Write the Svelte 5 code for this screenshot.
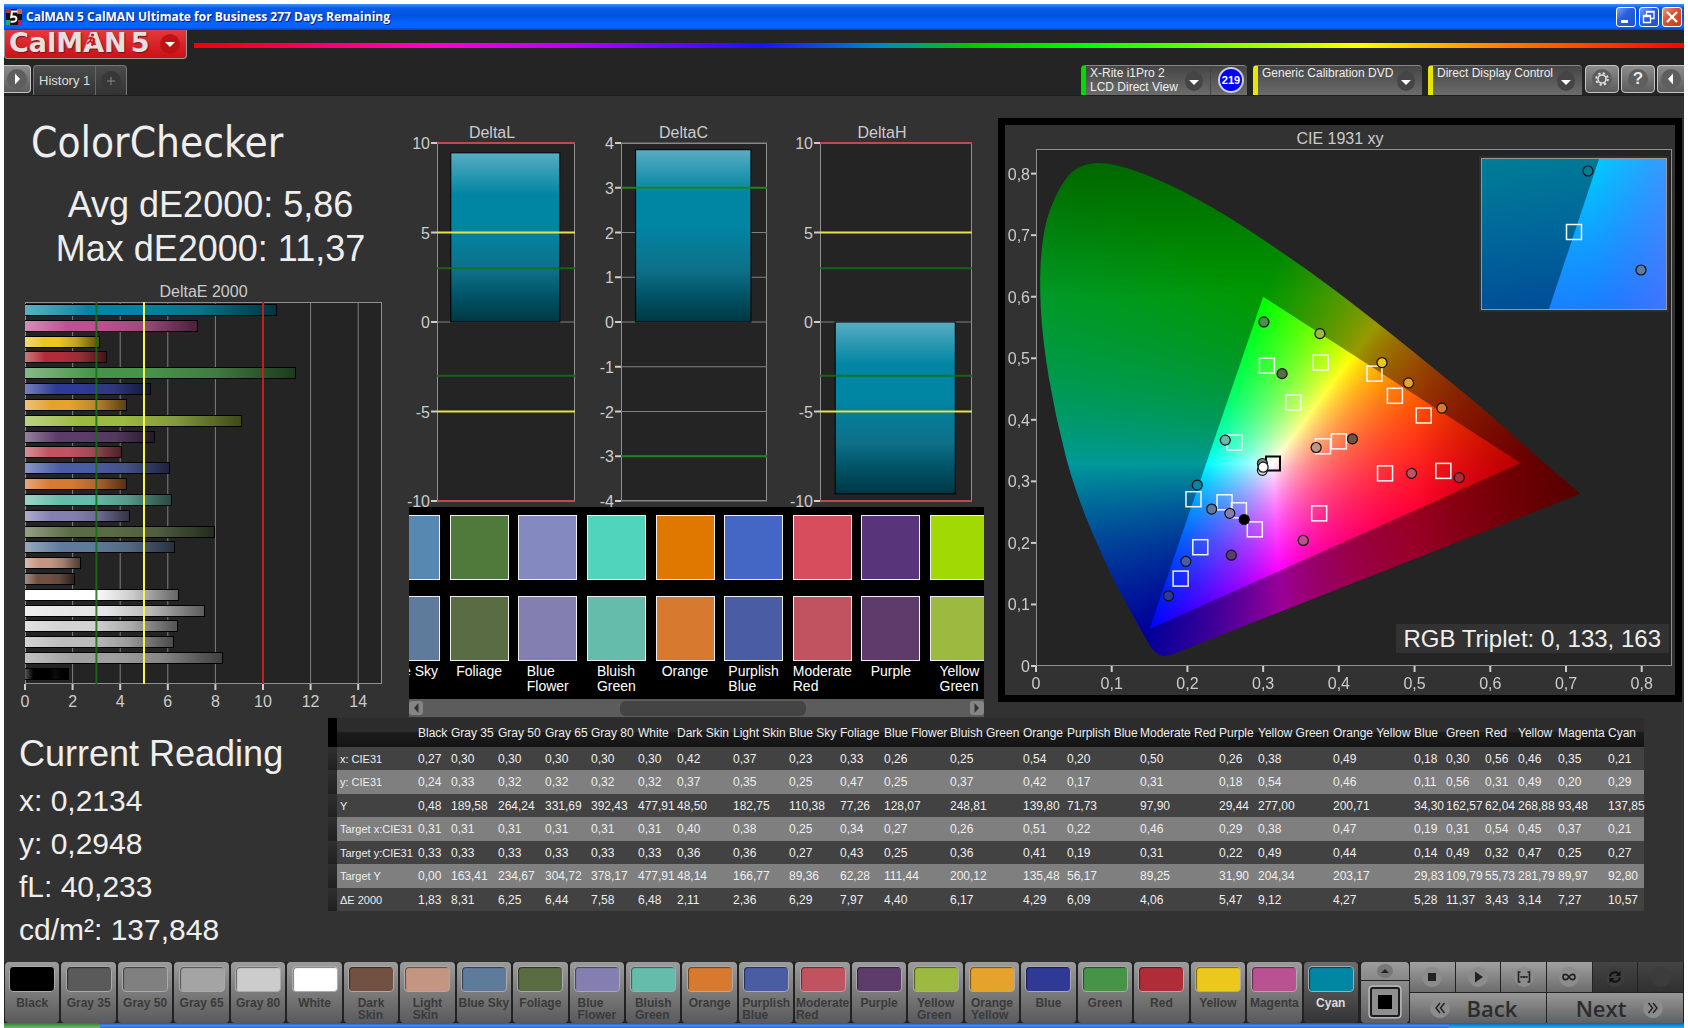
<script>
    import { onMount } from 'svelte';

    const patches = [
        { name: 'Black', color: '#000000', width: 33, values: ['0,27', '0,24', '0,48', '0,31', '0,33', '0,00', '1,83'] },
        { name: 'Gray 35', color: '#5a5a5a', bar: '#a0a0a0', width: 47, values: ['0,30', '0,33', '189,58', '0,31', '0,33', '163,41', '8,31'] },
        { name: 'Gray 50', color: '#808080', bar: '#bcbcbc', width: 47, values: ['0,30', '0,32', '264,24', '0,31', '0,33', '234,67', '6,25'] },
        { name: 'Gray 65', color: '#a4a4a4', bar: '#d2d2d2', width: 46, values: ['0,30', '0,32', '331,69', '0,31', '0,33', '304,72', '6,44'] },
        { name: 'Gray 80', color: '#cccccc', bar: '#e6e6e6', width: 47, values: ['0,30', '0,32', '392,43', '0,31', '0,33', '378,17', '7,58'] },
        { name: 'White', color: '#ffffff', width: 39, values: ['0,30', '0,32', '477,91', '0,31', '0,33', '477,91', '6,48'] },
        { name: 'Dark Skin', color: '#735142', width: 56, values: ['0,42', '0,37', '48,50', '0,40', '0,36', '48,14', '2,11'] },
        { name: 'Light Skin', color: '#c49682', width: 56, values: ['0,37', '0,35', '182,75', '0,38', '0,36', '166,77', '2,36'] },
        { name: 'Blue Sky', color: '#5e7b9c', target: '#5688b2', oneLine: true, width: 51, values: ['0,23', '0,25', '110,38', '0,25', '0,27', '89,36', '6,29'] },
        { name: 'Foliage', color: '#596c43', target: '#4f7a3c', width: 44, values: ['0,33', '0,47', '77,26', '0,34', '0,43', '62,28', '7,97'] },
        { name: 'Blue Flower', color: '#8380b1', target: '#8489bf', width: 66, values: ['0,26', '0,25', '128,07', '0,27', '0,25', '111,44', '4,40'] },
        { name: 'Bluish Green', color: '#65bcaa', target: '#50d4bb', width: 73, values: ['0,25', '0,37', '248,81', '0,26', '0,36', '200,12', '6,17'] },
        { name: 'Orange', color: '#d87930', target: '#e07800', width: 44, values: ['0,54', '0,42', '139,80', '0,51', '0,41', '135,48', '4,29'] },
        { name: 'Purplish Blue', color: '#4a5ca4', target: '#4466c4', width: 73, values: ['0,20', '0,17', '71,73', '0,22', '0,19', '56,17', '6,09'] },
        { name: 'Moderate Red', color: '#c15361', target: '#d64d5d', width: 79, values: ['0,50', '0,31', '97,90', '0,46', '0,31', '89,25', '4,06'] },
        { name: 'Purple', color: '#5d3c6b', target: '#58357a', width: 39, values: ['0,26', '0,18', '29,44', '0,29', '0,22', '31,90', '5,47'] },
        { name: 'Yellow Green', color: '#9dba40', target: '#a1d904', width: 75, values: ['0,38', '0,54', '277,00', '0,38', '0,49', '204,34', '9,12'] },
        { name: 'Orange Yellow', color: '#e5a22c', width: 81, values: ['0,49', '0,46', '200,71', '0,47', '0,44', '203,17', '4,27'] },
        { name: 'Blue', color: '#2e3a96', width: 32, values: ['0,18', '0,11', '34,30', '0,19', '0,14', '29,83', '5,28'] },
        { name: 'Green', color: '#479448', width: 39, values: ['0,30', '0,56', '162,57', '0,31', '0,49', '109,79', '11,37'] },
        { name: 'Red', color: '#b02c38', width: 33, values: ['0,56', '0,31', '62,04', '0,54', '0,32', '55,73', '3,43'] },
        { name: 'Yellow', color: '#ecc71c', width: 40, values: ['0,46', '0,49', '268,88', '0,45', '0,47', '281,79', '3,14'] },
        { name: 'Magenta', color: '#ba5292', width: 50, values: ['0,35', '0,20', '93,48', '0,37', '0,25', '89,97', '7,27'] },
        { name: 'Cyan', color: '#0085a3', width: 39, values: ['0,21', '0,29', '137,85', '0,21', '0,27', '92,80', '10,57'] }
    ];

    const rowNames = ['x: CIE31', 'y: CIE31', 'Y', 'Target x:CIE31', 'Target y:CIE31', 'Target Y', 'ΔE 2000'];
    const tableWidth = 87 + patches.reduce((sum, p) => sum + p.width, 0);

    const bars = patches
        .map((p) => ({ color: p.bar ?? p.color, value: parseFloat(p.values[6].replace(',', '.')) }))
        .reverse();

    const strip = patches.filter((p) => p.target);

    const deltaCharts = [
        { title: 'DeltaL', max: 10, step: 5, value: 9.45, limits: [[3, 'green'], [5, 'yellow'], [10, 'red']] },
        { title: 'DeltaC', max: 4, step: 1, value: 3.85, limits: [[3, 'bright']], short: true },
        { title: 'DeltaH', max: 10, step: 5, value: -9.6, limits: [[3, 'green'], [5, 'yellow'], [10, 'red']] }
    ];

    function ticks(max, step) {
        const list = [];
        for (let v = max; v >= -max; v -= step) list.push(v);
        return list;
    }

    // chromaticity diagram, both axes run from 0 to 0.84
    const span = 0.84;
    const cieTicks = [0, 0.1, 0.2, 0.3, 0.4, 0.5, 0.6, 0.7, 0.8];
    const px = (x) => `${(x / span) * 100}%`;
    const py = (y) => `${(1 - y / span) * 100}%`;
    const comma = (v) => String(v).replace('.', ',');

    const targets = [
        [0.305, 0.488], [0.376, 0.493], [0.34, 0.428], [0.447, 0.475], [0.474, 0.439], [0.512, 0.407],
        [0.262, 0.363], [0.379, 0.357], [0.4, 0.365], [0.208, 0.271], [0.249, 0.266], [0.268, 0.253],
        [0.289, 0.222], [0.217, 0.193], [0.191, 0.142], [0.374, 0.248], [0.461, 0.313], [0.538, 0.317]
    ];

    const readings = [
        [0.301, 0.559, '#479448'], [0.375, 0.54, '#9dba40'], [0.325, 0.475, '#596c43'], [0.457, 0.493, '#ecc71c'],
        [0.492, 0.46, '#e5a22c'], [0.536, 0.419, '#d87930'], [0.25, 0.367, '#65bcaa'], [0.37, 0.355, '#c49682'],
        [0.418, 0.369, '#735142'], [0.213, 0.294, '#0085a3'], [0.232, 0.255, '#5e7b9c'], [0.256, 0.248, '#8380b1'],
        [0.275, 0.238, '#000000'], [0.353, 0.204, '#ba5292'], [0.258, 0.18, '#5d3c6b'], [0.198, 0.17, '#4a5ca4'],
        [0.175, 0.114, '#2e3a96'], [0.496, 0.313, '#c15361'], [0.559, 0.306, '#b02c38'], [0.299, 0.329, '#808080'],
        [0.299, 0.318, '#dddddd'], [0.3, 0.323, '#ffffff']
    ];

    const locus = [
        [0.719, 0.28], [0.659, 0.342], [0.598, 0.411], [0.527, 0.482], [0.456, 0.553], [0.383, 0.622],
        [0.315, 0.681], [0.262, 0.724], [0.192, 0.774], [0.127, 0.808], [0.0847, 0.819], [0.0594, 0.813],
        [0.043, 0.799], [0.026, 0.766], [0.0106, 0.715], [0.0042, 0.634], [0.0085, 0.529], [0.026, 0.404],
        [0.052, 0.28], [0.098, 0.15], [0.128, 0.082], [0.148, 0.038], [0.157, 0.021], [0.172, 0.014], [0.19, 0.024]
    ];

    let canvas;

    // linear sRGB of a chromaticity, scaled so that the strongest channel is full
    function chroma(x, y) {
        const X = x / y;
        const Z = (1 - x - y) / y;
        const rgb = [
            3.2406 * X - 1.5372 - 0.4986 * Z,
            -0.9689 * X + 1.8758 + 0.0415 * Z,
            0.0557 * X - 0.204 + 1.057 * Z
        ].map((c) => Math.max(c, 0));
        const top = Math.max(...rgb);
        return rgb.map((c) => (255 * c) / top);
    }

    function paintLayer(w, h, level, outline) {
        const layer = document.createElement('canvas');
        layer.width = w;
        layer.height = h;
        const ctx = layer.getContext('2d');
        const image = ctx.createImageData(w, h);
        for (let j = 0; j < h; j++) {
            for (let i = 0; i < w; i++) {
                const x = ((i + 0.5) / w) * span;
                const y = (1 - (j + 0.5) / h) * span;
                const fade = level * Math.min(1, 1 - (x - 0.5) * 2.1) * Math.min(1, 1 - (y - 0.6) * 1.5);
                const [r, g, b] = chroma(x, y);
                image.data.set([r * fade, g * fade, b * fade, 255], (j * w + i) * 4);
            }
        }
        ctx.putImageData(image, 0, 0);
        ctx.globalCompositeOperation = 'destination-in';
        ctx.beginPath();
        outline(ctx, ([x, y]) => [(x / span) * w, (1 - y / span) * h]);
        ctx.closePath();
        ctx.fill();
        return layer;
    }

    onMount(() => {
        const { width: w, height: h } = canvas;
        const ctx = canvas.getContext('2d');
        const dark = paintLayer(w, h, 0.6, (c, at) => {
            c.moveTo(...at(locus[0]));
            for (let i = 1; i < locus.length - 1; i++) {
                const [ax, ay] = at(locus[i]);
                const [bx, by] = at(locus[i + 1]);
                c.quadraticCurveTo(ax, ay, (ax + bx) / 2, (ay + by) / 2);
            }
            c.lineTo(...at(locus[locus.length - 1]));
        });
        const bright = paintLayer(w, h, 1, (c, at) => {
            c.moveTo(...at([0.64, 0.33]));
            c.lineTo(...at([0.3, 0.6]));
            c.lineTo(...at([0.15, 0.06]));
        });
        ctx.drawImage(dark, 0, 0);
        ctx.drawImage(bright, 0, 0);
    });
</script>

<div class="window">
    <div class="titlebar">
        <svg class="app-icon" viewBox="0 0 16 16" width="16" height="16">
            <rect width="16" height="16" fill="#111" />
            <path d="M0 0h5v4H0z" fill="#a33" /><path d="M11 0h5v5h-5z" fill="#c63" />
            <path d="M0 11h4v5H0z" fill="#2a6" /><path d="M12 11h4v5h-4z" fill="#a26" />
            <path d="M11.500 2.500H6L5.200 8q5-1.500 5.300 1.800Q10.300 13.500 4.500 12.500" fill="none" stroke="#fff" stroke-width="2" />
        </svg>
        <span class="title">CalMAN 5 CalMAN Ultimate for Business 277 Days Remaining</span>
        <button class="win-button" aria-label="Minimize">
            <svg viewBox="0 0 18 18" width="18" height="18"><path d="M4 12h7v3H4z" fill="#fff" /></svg>
        </button>
        <button class="win-button" aria-label="Restore">
            <svg viewBox="0 0 18 18" width="18" height="18"><path d="M6.500 7V3.500h7.500v7h-3M6 4h8M3.500 7.500h7v7h-7zM3 8.500h8" fill="none" stroke="#fff" stroke-width="1.300" /></svg>
        </button>
        <button class="win-button close" aria-label="Close">
            <svg viewBox="0 0 18 18" width="18" height="18"><path d="M4 4l10 10M14 4L4 14" stroke="#fff" stroke-width="2.400" /></svg>
        </button>
    </div>

    <header>
        <div class="brand-row">
            <button class="brand">
                <span>CalMAN</span><span>5</span>
                <svg class="runner" viewBox="0 0 12 14" width="12" height="14">
                    <circle cx="7.500" cy="2" r="1.600" fill="#c9171c" />
                    <path d="M7 4L5 8l3 2-1 3M5 8L2 11M2.500 6L6 4.500 10 7" fill="none" stroke="#c9171c" stroke-width="1.600" />
                </svg>
                <svg class="brand-arrow" viewBox="0 0 20 20" width="20" height="20"><circle cx="10" cy="10" r="10" fill="#c01216" /><path d="M5 8h10l-5 5z" fill="#fff" /></svg>
            </button>
            <div class="rainbow"></div>
        </div>
        <div class="tab-row">
            <button class="square left-edge" aria-label="Show workflow">
                <svg viewBox="0 0 20 20" width="20" height="20"><circle cx="10" cy="10" r="10" /><path d="M8 4.500l5 5.500-5 5.500z" fill="#fff" /></svg>
            </button>
            <div class="tabs">
                <button class="tab">History 1</button>
                <button class="tab add" aria-label="New history">
                    <svg viewBox="0 0 20 20" width="20" height="20"><circle cx="10" cy="10" r="10" fill="#383838" /><path d="M10 6v8M6 10h8" stroke="#888" /></svg>
                </button>
            </div>
            <div class="devices">
                <div class="device meter">
                    <button class="device-main">
                        <span>X-Rite i1Pro 2<br />LCD Direct View</span>
                        <svg viewBox="0 0 18 20" width="18" height="20"><ellipse cx="9" cy="10" rx="9" ry="10" /><path d="M4 9h10l-5 5z" fill="#fff" /></svg>
                    </button>
                    <span class="count">219</span>
                </div>
                <div class="device source">
                    <button class="device-main">
                        <span>Generic Calibration DVD</span>
                        <svg viewBox="0 0 18 20" width="18" height="20"><ellipse cx="9" cy="10" rx="9" ry="10" /><path d="M4 9h10l-5 5z" fill="#fff" /></svg>
                    </button>
                </div>
                <div class="device display">
                    <button class="device-main">
                        <span>Direct Display Control</span>
                        <svg viewBox="0 0 18 20" width="18" height="20"><ellipse cx="9" cy="10" rx="9" ry="10" /><path d="M4 9h10l-5 5z" fill="#fff" /></svg>
                    </button>
                </div>
                <button class="square" aria-label="Settings">
                    <svg viewBox="0 0 20 20" width="20" height="20"><circle cx="10" cy="10" r="10" /><circle cx="10" cy="10" r="4" fill="none" stroke="#ddd" stroke-width="1.600" /><circle cx="10" cy="10" r="5.800" fill="none" stroke="#ddd" stroke-width="2" stroke-dasharray="2.300 2.255" /></svg>
                </button>
                <button class="square help" aria-label="Help"><span>?</span></button>
                <button class="square right-edge" aria-label="Collapse">
                    <svg viewBox="0 0 20 20" width="20" height="20"><circle cx="10" cy="10" r="10" /><path d="M12 4.500L7 10l5 5.500z" fill="#fff" /></svg>
                </button>
            </div>
        </div>
    </header>

    <main>
        <div class="charts">
            <section class="summary">
                <h1>ColorChecker</h1>
                <p>Avg dE2000: 5,86</p>
                <p>Max dE2000: 11,37</p>
                <h2>DeltaE 2000</h2>
                <div class="plot de">
                    <svg class="layer">
                        {#each [2, 4, 6, 8, 10, 12, 14] as t}
                            <line class="gridline" x1="{t / 0.15}%" x2="{t / 0.15}%" y1="0" y2="100%" />
                        {/each}
                    </svg>
                    <div class="layer bars">
                        {#each bars as bar}
                            <div class="bar" style:--c={bar.color} style:width="{bar.value / 0.15}%"></div>
                        {/each}
                    </div>
                    <svg class="layer">
                        <line class="limit green" x1="20%" x2="20%" y1="0" y2="100%" />
                        <line class="limit yellow" x1="33.333%" x2="33.333%" y1="0" y2="100%" />
                        <line class="limit red" x1="66.667%" x2="66.667%" y1="0" y2="100%" />
                        {#each [0, 2, 4, 6, 8, 10, 12, 14] as t}
                            <svg x="{t / 0.15}%" y="100%" overflow="visible">
                                <line class="tick" y2="6" />
                                <text y="23" text-anchor="middle">{t}</text>
                            </svg>
                        {/each}
                    </svg>
                </div>
            </section>

            <section class="middle">
                <div class="deltas">
                    {#each deltaCharts as chart}
                        <div class="delta" class:short={chart.short}>
                            <h2>{chart.title}</h2>
                            <div class="plot">
                                <svg class="layer">
                                    <defs>
                                        <linearGradient id="cyan-{chart.title}" x1="0" y1="0" x2="0" y2="1">
                                            <stop offset="0" stop-color="#58adc2" />
                                            <stop offset="0.25" stop-color="#0085a3" />
                                            <stop offset="0.45" stop-color="#0085a3" />
                                            <stop offset="0.7" stop-color="#0e7088" />
                                            <stop offset="0.85" stop-color="#005366" />
                                            <stop offset="1" stop-color="#003743" />
                                        </linearGradient>
                                    </defs>
                                    {#each ticks(chart.max, chart.step) as t}
                                        {@const y = 50 - (t / chart.max) * 50}
                                        {#if chart.short || t === 0}
                                            <line class="gridline" x1="0" x2="100%" y1="{y}%" y2="{y}%" />
                                        {/if}
                                        <svg y="{y}%" overflow="visible">
                                            <line class="tick" x1="-6" />
                                            <text x="-7" y="6" text-anchor="end">{t}</text>
                                        </svg>
                                    {/each}
                                    <rect
                                        x="10%"
                                        width="79%"
                                        y="{chart.value > 0 ? 50 - (chart.value / chart.max) * 50 : 50}%"
                                        height="{(Math.abs(chart.value) / chart.max) * 50}%"
                                        fill="url(#cyan-{chart.title})"
                                        stroke="#000"
                                    />
                                    {#each chart.limits as [v, tone]}
                                        {@const off = (v / chart.max) * 50}
                                        <line class="limit {tone}" x1="0" x2="100%" y1="{50 - off}%" y2="{50 - off}%" />
                                        <line class="limit {tone}" x1="0" x2="100%" y1="{50 + off}%" y2="{50 + off}%" />
                                    {/each}
                                </svg>
                            </div>
                        </div>
                    {/each}
                </div>

                <div class="strip">
                    <ul>
                        {#each strip as patch}
                            <li>
                                <div class="swatch" style:background={patch.target}></div>
                                <div class="swatch" style:background={patch.color}></div>
                                <span>
                                    {#if patch.oneLine}
                                        {patch.name}
                                    {:else}
                                        {#each patch.name.split(' ') as word}<b>{word}</b>{/each}
                                    {/if}
                                </span>
                            </li>
                        {/each}
                    </ul>
                    <div class="scrollbar">
                        <button aria-label="Scroll left"><svg viewBox="0 0 14 14" width="14" height="14"><path d="M9.500 2L5 7l4.500 5z" fill="#333" /></svg></button>
                        <div class="track"><div class="thumb"></div></div>
                        <button aria-label="Scroll right"><svg viewBox="0 0 14 14" width="14" height="14"><path d="M4.500 2L9 7l-4.500 5z" fill="#333" /></svg></button>
                    </div>
                </div>
            </section>

            <section class="cie">
                <h2>CIE 1931 xy</h2>
                <div class="plot">
                    <canvas class="layer" width="636" height="517" bind:this={canvas}></canvas>
                    <svg class="layer">
                        {#each cieTicks as t}
                            <svg x={px(t)} y="100%" overflow="visible">
                                <line class="tick" y2="6" />
                                <text y="23" text-anchor="middle">{comma(t)}</text>
                            </svg>
                            <svg y={py(t)} overflow="visible">
                                <line class="tick" x1="-5" />
                                <text x="-6" y="6" text-anchor="end">{comma(t)}</text>
                            </svg>
                        {/each}
                        {#each targets as [x, y]}
                            <svg x={px(x)} y={py(y)} overflow="visible"><rect class="target" x="-7.500" y="-7.500" width="15" height="15" /></svg>
                        {/each}
                        <svg x={px(0.313)} y={py(0.329)} overflow="visible"><rect class="target white-point" x="-7" y="-7" width="14" height="14" /></svg>
                        {#each readings as [x, y, color]}
                            <circle cx={px(x)} cy={py(y)} r="5" fill={color} stroke="#111" stroke-width="1.200" />
                        {/each}
                    </svg>
                    <svg class="inset" viewBox="0 0 184 150" preserveAspectRatio="none">
                        <defs>
                            <linearGradient id="inset-dark" x1="0" y1="0" x2="0.200" y2="1">
                                <stop offset="0" stop-color="#007d96" />
                                <stop offset="0.5" stop-color="#00689a" />
                                <stop offset="1" stop-color="#004e98" />
                            </linearGradient>
                            <linearGradient id="inset-light" x1="0.400" y1="0" x2="0.550" y2="1">
                                <stop offset="0" stop-color="#00ccff" />
                                <stop offset="0.5" stop-color="#10a0ff" />
                                <stop offset="1" stop-color="#1a7cff" />
                            </linearGradient>
                            <linearGradient id="inset-tint" x1="0" y1="0" x2="1" y2="0">
                                <stop offset="0.4" stop-color="#5a60ff" stop-opacity="0" />
                                <stop offset="1" stop-color="#6a70ff" stop-opacity="0.500" />
                            </linearGradient>
                        </defs>
                        <rect width="184" height="150" fill="url(#inset-dark)" />
                        <path d="M117 0H184V150H67z" fill="url(#inset-light)" />
                        <path d="M117 0H184V150H67z" fill="url(#inset-tint)" />
                        <circle cx="106" cy="12" r="5" fill="#007d96" stroke="#111" stroke-width="1.200" />
                        <rect class="target" x="84.500" y="65.500" width="15" height="15" />
                        <circle cx="159" cy="111" r="5" fill="#5e7b9c" stroke="#111" stroke-width="1.200" />
                    </svg>
                    <p class="triplet">RGB Triplet: 0, 133, 163</p>
                </div>
            </section>
        </div>

        <div class="details">
            <section class="reading">
                <h2>Current Reading</h2>
                <p>x: 0,2134</p>
                <p>y: 0,2948</p>
                <p>fL: 40,233</p>
                <p>cd/m²: 137,848</p>
            </section>
            <div class="table-wrap">
                <table>
                    <colgroup>
                        <col style:width="{900 / tableWidth}%" />
                        <col style:width="{7800 / tableWidth}%" />
                        {#each patches as patch}
                            <col style:width="{(patch.width * 100) / tableWidth}%" />
                        {/each}
                    </colgroup>
                    <thead>
                        <tr>
                            <td class="handle"></td>
                            <td></td>
                            {#each patches as patch}
                                <th scope="col">{patch.name}</th>
                            {/each}
                        </tr>
                    </thead>
                    <tbody>
                        {#each rowNames as name, i}
                            <tr>
                                <td class="handle"></td>
                                <th scope="row">{name}</th>
                                {#each patches as patch}
                                    <td>{patch.values[i]}</td>
                                {/each}
                            </tr>
                        {/each}
                    </tbody>
                </table>
            </div>
        </div>
    </main>

    <footer>
        <div class="palette">
            {#each patches as patch}
                <button class="patch" class:active={patch.name === 'Cyan'}>
                    <i style:background={patch.color}></i>
                    <span>
                        {#if patch.oneLine || patch.name.startsWith('Gray')}
                            {patch.name}
                        {:else}
                            {#each patch.name.split(' ') as word}<b>{word}</b>{/each}
                        {/if}
                    </span>
                </button>
            {/each}
        </div>
        <div class="window-mode">
            <button class="up" aria-label="More">
                <svg viewBox="0 0 16 14" width="16" height="14"><ellipse cx="8" cy="7" rx="8" ry="7" fill="#777" /><path d="M4 9l4-4 4 4z" fill="#222" /></svg>
            </button>
            <button class="pattern" aria-label="Pattern window">
                <svg viewBox="0 0 34 34" width="34" height="34">
                    <rect x="1" y="1" width="32" height="32" rx="3" fill="#8f8f8f" stroke="#ccc" />
                    <rect x="3" y="3" width="28" height="28" rx="2" fill="none" stroke="#1c1c1c" stroke-width="2" />
                    <path d="M10 10h14v14H10z" />
                </svg>
            </button>
        </div>
        <div class="controls">
            <button aria-label="Stop"><svg viewBox="0 0 20 20" width="20" height="20"><circle cx="10" cy="10" r="10" /><path d="M6 6h8v8H6z" fill="#222" /></svg></button>
            <button aria-label="Read"><svg viewBox="0 0 20 20" width="20" height="20"><circle cx="10" cy="10" r="10" /><path d="M7 4.500l8 5.500-8 5.500z" fill="#222" /></svg></button>
            <button aria-label="Read series"><svg viewBox="0 0 20 20" width="20" height="20"><circle cx="10" cy="10" r="10" /><path d="M6.500 5H4.500v10h2M13.500 5h2v10h-2" fill="none" stroke="#222" stroke-width="1.600" /><path d="M6.500 9h2v2h-2zM9 9h2v2H9zM11.500 9h2v2h-2z" fill="#222" /></svg></button>
            <button aria-label="Read continuous"><svg viewBox="0 0 20 20" width="20" height="20"><circle cx="10" cy="10" r="10" /><path d="M10 10C8 6.500 4 6.500 4 10s4 3.500 6 0 6-3.500 6 0-4 3.500-6 0" fill="none" stroke="#222" stroke-width="1.600" /></svg></button>
            <button class="off" aria-label="Refresh" disabled><svg viewBox="0 0 20 20" width="20" height="20"><circle cx="10" cy="10" r="10" /><path d="M5 9.500C5.500 5 11 4 14 7M15 10.500C14.500 15 9 16 6 13" fill="none" stroke="#111" stroke-width="2" /><path d="M15.500 4v5h-5zM4.500 16v-5h5z" fill="#111" /></svg></button>
            <button class="off" aria-label="Record" disabled><svg viewBox="0 0 20 20" width="20" height="20"><circle cx="10" cy="10" r="10" /></svg></button>
            <button class="nav back">
                <svg viewBox="0 0 20 20" width="20" height="20"><circle cx="10" cy="10" r="10" /><path d="M10 5l-4 5 4 5M14.500 5l-4 5 4 5" fill="none" stroke="#222" stroke-width="1.500" /></svg>
                Back
            </button>
            <button class="nav next">
                Next
                <svg viewBox="0 0 20 20" width="20" height="20"><circle cx="10" cy="10" r="10" /><path d="M5.500 5l4 5-4 5M10 5l4 5-4 5" fill="none" stroke="#222" stroke-width="1.500" /></svg>
            </button>
        </div>
    </footer>
    <div class="taskbar"><div class="start"></div><div class="tray"></div></div>
</div>

<style>
    :global(body) {
        margin: 0;
        background: #fff;
    }

    .window {
        display: flex;
        flex-direction: column;
        box-sizing: border-box;
        min-height: 100vh;
        padding: 4px 4px 0;
        font-family: 'Liberation Sans', Arial, sans-serif;
        color: #eee;
    }

    button {
        margin: 0;
        padding: 0;
        border: 0;
        font: inherit;
        color: inherit;
        background: none;
    }

    svg {
        display: block;
    }

    h1, h2, p {
        margin: 0;
        font-weight: normal;
    }

    .titlebar {
        display: flex;
        align-items: center;
        gap: 3px;
        height: 26px;
        padding: 0 2px;
        background: linear-gradient(#3a93ff, #0a5be8 15%, #0053e1 45%, #0465ff 75%, #0463f8 90%, #0042c0);
    }

    .title {
        flex: 1;
        padding-left: 1px;
        font: bold 12px/16px 'Open Sans', sans-serif;
        color: #fff;
        text-shadow: 1px 1px #0a1883;
    }

    .win-button {
        width: 20px;
        height: 20px;
        border: 1px solid #fff;
        border-radius: 3px;
        background: linear-gradient(135deg, #7ba2f5, #2b5fe0 40%, #1e50d0);
    }

    .win-button.close {
        background: linear-gradient(135deg, #f09a80, #df5230 40%, #c63a14);
    }

    header {
        height: 65px;
        background: #242424;
        border-bottom: 1px solid #1e1e1e;
    }

    .brand-row {
        display: flex;
        align-items: center;
        gap: 7px;
        height: 29px;
    }

    .brand {
        position: relative;
        display: flex;
        align-items: center;
        gap: 4px;
        box-sizing: border-box;
        width: 183px;
        height: 29px;
        padding: 0 6px 0 4px;
        border: 1px solid #999;
        border-top: 0;
        border-radius: 0 0 4px 4px;
        background: linear-gradient(#e23a3e, #cc1016);
        font: bold 27px/24px 'DejaVu Sans', sans-serif;
        color: #e4e0e0;
        text-shadow: 1px 1px 1px #7a1014;
    }

    .brand span {
        padding-bottom: 3px;
    }

    .runner {
        position: absolute;
        left: 80px;
        top: 3px;
    }

    .brand-arrow {
        margin-left: auto;
    }

    .rainbow {
        flex: 1;
        height: 5px;
        margin-top: 1px;
        background: linear-gradient(90deg, #f00000, #ff00c8 16%, #b000ff 26%, #1a10ff 38%, #0088c0 46%, #00c800 52%, #00ff00 60%, #ffff00 78%, #ff8800 87%, #ff0000);
    }

    .tab-row {
        display: flex;
        gap: 2px;
        height: 30px;
        margin-top: 6px;
    }

    .square {
        display: flex;
        align-items: center;
        justify-content: center;
        box-sizing: border-box;
        width: 34px;
        height: 28px;
        border: 1px solid #c4c4c4;
        border-radius: 4px;
        background: linear-gradient(#8c8c8c, #5c5c5c);
        fill: #5e5e5e;
    }

    .square.left-edge {
        width: 27px;
        border-left: 0;
        border-radius: 0 4px 4px 0;
    }

    .square.right-edge {
        width: 27px;
        border-right: 0;
        border-radius: 4px 0 0 4px;
    }

    .help span {
        width: 20px;
        border-radius: 50%;
        background: #5e5e5e;
        font: bold 17px/20px 'Liberation Sans', sans-serif;
        color: #e8e8e8;
    }

    .tabs {
        display: flex;
        border: 1px solid #777;
        border-bottom: 0;
        border-radius: 4px 4px 0 0;
        background: linear-gradient(#4c4c4c, #333);
    }

    .tab {
        padding: 0 5px;
        font-size: 13px;
        color: #ddd;
    }

    .tab.add {
        border-left: 1px solid #666;
    }

    .devices {
        display: flex;
        gap: 2px;
        margin-left: auto;
    }

    .device {
        display: flex;
        align-items: center;
        box-sizing: border-box;
        margin-right: 4px;
        border-left: 5px solid #e6e600;
        border-top: 1px solid #888;
        border-radius: 4px 4px 0 0;
        background: linear-gradient(#454545, #6c6c6c);
        font-size: 12px;
        line-height: 14px;
        fill: #454545;
    }

    .device.meter {
        width: 166px;
        border-left-color: #00dc00;
    }

    .device.source {
        width: 169px;
    }

    .device.display {
        width: 154px;
        margin-right: 1px;
    }

    .device-main {
        display: flex;
        flex: 1;
        align-items: center;
        justify-content: space-between;
        align-self: stretch;
        padding: 0 7px 0 4px;
        text-align: left;
        white-space: nowrap;
    }

    .meter .device-main {
        border-right: 1px solid #444;
    }

    .device-main span {
        align-self: flex-start;
    }

    .count {
        width: 22px;
        margin: 0 3px 2px 7px;
        border: 2px solid #ccd;
        border-radius: 50%;
        background: #0000f4;
        font: bold 11px/22px 'Liberation Sans', sans-serif;
        text-align: center;
        color: #fff;
    }

    main {
        flex: 1;
        background: #323232;
    }

    .charts {
        display: grid;
        grid-template-columns: 391fr 575fr 684fr;
        gap: 14px;
        height: 622px;
        padding-right: 2px;
    }

    .charts h2 {
        font-size: 16px;
        line-height: 20px;
        text-align: center;
        color: #ccc;
    }

    .charts text {
        font-size: 16px;
        fill: #ccc;
    }

    .plot {
        display: grid;
        background: #242424;
        box-shadow: inset 0 0 0 1px #909090;
    }

    .layer {
        grid-area: 1 / 1;
        width: 100%;
        height: 100%;
        min-width: 0;
        min-height: 0;
        overflow: visible;
    }

    .gridline {
        stroke: #808080;
    }

    .tick {
        stroke: #ccc;
        stroke-width: 2;
    }

    .limit {
        stroke-width: 2;
    }

    .green {
        stroke: #157015;
        stroke-opacity: 0.850;
    }

    .bright {
        stroke: #1e821e;
    }

    .yellow {
        stroke: #e6e24a;
    }

    .red {
        stroke: #c04a4a;
    }

    .de .yellow {
        stroke: #f6f650;
    }

    .de .red {
        stroke: #c02020;
    }

    .summary {
        padding: 22px 13px 0 21px;
    }

    h1 {
        margin: 0 0 15px 6px;
        font: 42px/50px 'DejaVu Sans Condensed', 'DejaVu Sans', sans-serif;
    }

    .summary p {
        padding-left: 14px;
        font-size: 36px;
        line-height: 44px;
        text-align: center;
    }

    .summary h2 {
        margin: 11px 0 0;
    }

    .de {
        height: 382px;
    }

    .bars {
        display: flex;
        flex-direction: column;
        justify-content: space-around;
        box-sizing: border-box;
        padding-bottom: 2px;
    }

    .bar {
        box-sizing: border-box;
        height: 12px;
        border: 1px solid #000;
        border-left: 0;
        background: linear-gradient(90deg, color-mix(in srgb, var(--c), #fff 35%), var(--c) 25%, var(--c) 45%, color-mix(in srgb, var(--c), #333 25%) 70%, color-mix(in srgb, var(--c), #000 60%));
    }

    .middle {
        min-width: 0;
        padding-top: 27px;
    }

    .deltas {
        display: grid;
        grid-template-columns: 166fr 167fr 180fr;
        gap: 25px;
        padding-right: 12px;
    }

    .delta .plot {
        height: 358px;
        margin-left: 28px;
    }

    .delta.short .plot {
        margin-left: 21px;
    }

    .strip {
        position: relative;
        margin-top: 6px;
        overflow: hidden;
        background: #000;
    }

    .strip ul {
        display: grid;
        grid-template-columns: repeat(9, 59px);
        justify-content: space-between;
        height: 184px;
        margin: 0 -5px 0 -28px;
        padding: 8px 0 0;
        list-style: none;
    }

    .swatch {
        box-sizing: border-box;
        height: 65px;
        margin-bottom: 16px;
        border: 1px solid #eee;
    }

    .swatch + .swatch {
        margin-bottom: 3px;
    }

    .strip span {
        display: block;
        width: fit-content;
        margin: 0 auto;
        font-size: 14px;
        line-height: 15px;
        white-space: nowrap;
        color: #fff;
    }

    b {
        display: block;
        font-weight: inherit;
    }

    .scrollbar {
        display: flex;
        align-items: center;
        height: 18px;
        background: #5c5c5c;
    }

    .scrollbar button {
        border-radius: 3px;
        background: #858585;
    }

    .track {
        flex: 1;
    }

    .thumb {
        width: 34%;
        height: 15px;
        margin-left: 36%;
        border-radius: 6px;
        background: #444;
    }

    .cie {
        height: 570px;
        margin-top: 22px;
        border: 7px solid #000;
    }

    .cie h2 {
        padding-top: 4px;
    }

    .cie .plot {
        position: relative;
        height: 517px;
        margin: 0 3px 0 31px;
    }

    .target {
        fill: none;
        stroke: #f4f4f4;
        stroke-width: 1.500;
    }

    .white-point {
        stroke: #000;
        stroke-width: 2;
    }

    .inset {
        position: absolute;
        top: 9px;
        right: 5px;
        width: 184px;
        height: 150px;
        border: 1px solid #999;
        outline: 2px solid #2e2e2e;
    }

    .triplet {
        position: absolute;
        right: 3px;
        bottom: 13px;
        padding: 0 8px;
        background: #323232;
        font-size: 24px;
        line-height: 29px;
    }

    .details {
        display: flex;
        align-items: flex-start;
        padding-right: 40px;
    }

    .reading {
        box-sizing: border-box;
        flex: none;
        width: 324px;
        padding: 14px 0 10px 15px;
    }

    .reading h2 {
        margin-bottom: 3px;
        font-size: 36px;
        line-height: 44px;
    }

    .reading p {
        font-size: 30px;
        line-height: 43px;
    }

    .table-wrap {
        flex: 1;
        min-width: 0;
    }

    table {
        width: 100%;
        table-layout: fixed;
        border-collapse: collapse;
        font-size: 12px;
        line-height: 20px;
    }

    th, td {
        padding: 0 0 0 3px;
        font-weight: normal;
        text-align: left;
        white-space: nowrap;
    }

    tbody th {
        font-size: 11px;
    }

    thead tr {
        height: 29px;
        background: linear-gradient(#2c2c2c 50%, #1c1c1c 50%, #141414);
    }

    thead .handle {
        background: #000;
    }

    tbody tr {
        height: 23px;
        background: #424242;
    }

    tbody tr:nth-child(even) {
        height: 24px;
        background: #7f7f7f;
    }

    tbody .handle {
        background: linear-gradient(#303030, #202020);
    }

    footer {
        display: grid;
        grid-template-columns: 1fr 48px 273px;
        gap: 1px;
        height: 61px;
        padding: 0 1px;
        background: #222;
    }

    .palette {
        display: grid;
        grid-template-columns: repeat(24, 1fr);
        gap: 2px;
        min-width: 0;
        padding-right: 2px;
    }

    .patch {
        display: flex;
        flex-direction: column;
        align-items: center;
        min-width: 0;
        padding-top: 4px;
        border-radius: 4px;
        background: linear-gradient(#9c9c9c, #5a5a5a);
        font-size: 12px;
        font-weight: bold;
        line-height: 12px;
        text-align: left;
        white-space: nowrap;
        color: #3a3a3a;
    }

    .patch.active {
        background: linear-gradient(#6c6c6c, #333);
        color: #ddd;
    }

    .patch i {
        box-sizing: border-box;
        width: 46px;
        height: 26px;
        margin-bottom: 5px;
        border: 1px solid #aaa;
        border-radius: 4px;
        box-shadow: inset 1px 1px 1px rgba(0, 0, 0, 0.5);
    }

    .window-mode {
        display: grid;
        grid-template-rows: 18px 42px;
        gap: 1px;
    }

    .window-mode button {
        display: flex;
        align-items: center;
        justify-content: center;
        background: linear-gradient(#9c9c9c, #888);
        border-radius: 4px 4px 0 0;
    }

    .window-mode .pattern {
        background: linear-gradient(#8c8c8c, #606060);
        border-radius: 0 0 4px 4px;
    }

    .controls {
        display: grid;
        grid-template-columns: repeat(6, 1fr);
        grid-template-rows: 30px 30px;
        gap: 1px;
    }

    .controls button {
        display: flex;
        align-items: center;
        justify-content: center;
        background: linear-gradient(#a0a0a0, #6c6c6c);
        fill: #8c8c8c;
    }

    .controls .off {
        background: linear-gradient(#444, #303030);
        fill: #3c3c3c;
    }

    .controls .nav {
        grid-column: span 3;
        gap: 17px;
        background: linear-gradient(#989898, #606060);
        font: 600 22px/28px 'Open Sans', sans-serif;
        color: #2c2c2c;
    }

    .controls .back {
        padding-right: 9px;
    }

    .controls .next {
        padding-left: 9px;
    }

    .taskbar {
        display: flex;
        justify-content: space-between;
        height: 5px;
        background: linear-gradient(#1c50b8, #3f8cf3 50%, #2a6ce0);
    }

    .start {
        width: 96px;
        border-radius: 0 4px 0 0;
        background: linear-gradient(#2f7a2f, #6cc06c);
    }

    .tray {
        width: 14%;
        background: linear-gradient(#0a60c0, #1ab4f4);
    }
</style>
